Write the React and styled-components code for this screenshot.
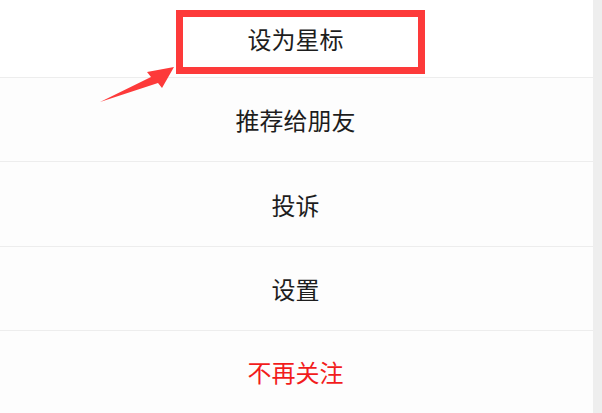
import styled, { createGlobalStyle } from "styled-components";

const Global = createGlobalStyle`
  html, body {
    margin: 0;
    padding: 0;
    background: #eeeeee;
    overflow: hidden;
  }
  body {
    font-family: "Noto Sans CJK SC", "Noto Sans", sans-serif;
  }
`;

const Page = styled.div`
  position: relative;
  display: flex;
  width: 602px;
  height: 413px;
  background: #eeeeee;
`;

const Backdrop = styled.div`
  width: 593px;
  height: 413px;
  background: #3d3d3d;
  overflow: hidden;
`;

const Sheet = styled.div`
  display: flex;
  flex-direction: column;
  margin-left: -6px;
  width: 599px;
  height: 413px;
  background: #ffffff;
  border-radius: 12px 12px 0 0;
`;

const Row = styled.div`
  display: flex;
  align-items: center;
  justify-content: center;
  height: ${(p) => p.$h}px;
  padding-left: 4px;
  border-top: ${(p) => (p.$first ? "none" : "1px solid #ededed")};
  font-size: 24px;
  color: ${(p) => (p.$danger ? "#f21c1c" : "#1d1d1d")};
  background: ${(p) => (p.$first ? "#ffffff" : "#fdfdfd")};
`;

const Highlight = styled.div`
  position: absolute;
  left: 176px;
  top: 10px;
  width: 249px;
  height: 64px;
  box-sizing: border-box;
  border: 7px solid #fd3a3a;
`;

const Arrow = styled.svg`
  position: absolute;
  left: 0;
  top: 0;
  pointer-events: none;
`;

const items = [
  { label: "设为星标", h: 78 },
  { label: "推荐给朋友", h: 84 },
  { label: "投诉", h: 84 },
  { label: "设置", h: 84 },
  { label: "不再关注", h: 83, danger: true },
];

const App = () => {
  return (
    <Page>
      <Global />
      <Backdrop>
        <Sheet>
          {items.map((it, i) => (
            <Row key={it.label} $h={it.h} $first={i === 0} $danger={it.danger}>
              {it.label}
            </Row>
          ))}
        </Sheet>
      </Backdrop>
      <Highlight />
      <Arrow width="602" height="413" viewBox="0 0 602 413">
        <polygon
          points="100,102 151,77 147,72 174,67 162,88 158,83"
          fill="#fd3a3a"
        />
      </Arrow>
    </Page>
  );
};

export default App;
